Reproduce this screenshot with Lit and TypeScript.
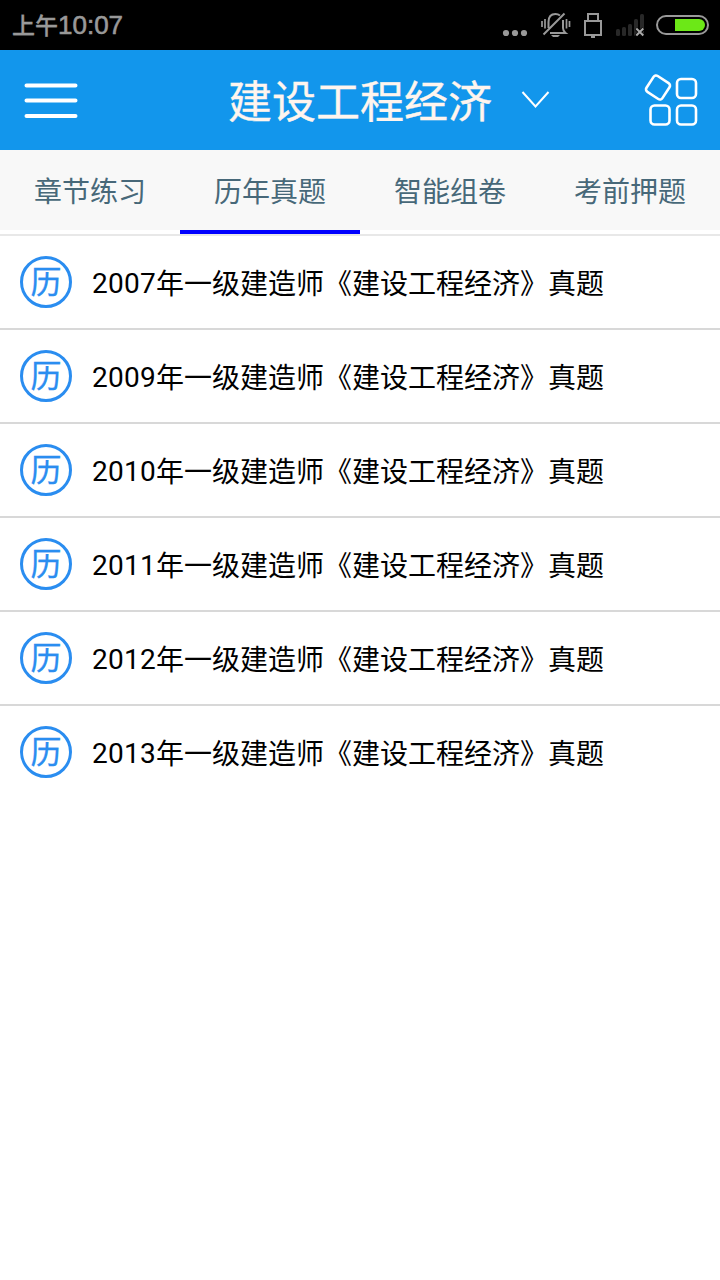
import { LitElement, html, css } from "lit";
import { customElement, property, state } from "lit/decorators.js";
import { classMap } from "lit/directives/class-map.js";

@customElement("status-bar")
class StatusBar extends LitElement {
  static styles = css`
    :host {
      display: flex;
      justify-content: space-between;
      height: 50px;
      background: #000;
      color: #999;
      overflow: hidden;
    }
    .time {
      display: flex;
      padding-left: 12px;
      font: 26px/50px "Liberation Sans", sans-serif;
      -webkit-text-stroke: 0.6px #999;
    }
    .cjk {
      font: 500 23px/48px "Noto Sans CJK SC", sans-serif;
      -webkit-text-stroke: 0.3px #999;
    }
    svg {
      display: block;
    }
  `;
  render() {
    return html`
      <div class="time"><span class="cjk">上午</span><span>10:07</span></div>
      <svg width="230" height="50" viewBox="490 0 230 50" fill="none" stroke="#999" stroke-width="2">
        <g fill="#999" stroke="none">
          <circle cx="506" cy="33" r="3.1" />
          <circle cx="515" cy="33" r="3.1" />
          <circle cx="524" cy="33" r="3.1" />
          <path d="M551 35h9l-2 2h-5z" />
        </g>
        <path d="M542 21v6M545 19v9.500M566.500 19v9.500M569.500 21v6" stroke-width="1.700" />
        <path d="M543.500 34.500L564.500 13.500M548.500 28v-6q0-8 7-8 2.500 0 4.500 1.500M563 20v8q0 3 2.500 5H550" stroke-width="2" />
        <path d="M588 21v-7h10v7M585 21h16v14h-16z" />
        <path d="M591 36.500h4" stroke-width="3" />
        <g fill="#282828" stroke="none">
          <rect x="616" y="29" width="4" height="7" rx="1.500" />
          <rect x="622" y="27" width="4" height="9" rx="1.500" />
          <rect x="628" y="24" width="4" height="12" rx="1.500" />
          <rect x="634" y="19" width="4" height="17" rx="1.500" />
          <rect x="640" y="14" width="4" height="22" rx="1.500" />
        </g>
        <path d="M636 28.500l7.500 7.500M643.500 28.500l-7.500 7.500" stroke="#000" stroke-width="3.500" />
        <path d="M636.300 28.500l7 7M643.300 28.500l-7 7" stroke="#aaa" />
        <rect x="657" y="16" width="51" height="18" rx="9" />
        <path d="M675 19h24a6 6 0 0 1 0 12h-24z" fill="#6ce817" stroke="none" />
      </svg>
    `;
  }
}

@customElement("title-bar")
class TitleBar extends LitElement {
  @property() heading = "";
  static styles = css`
    :host {
      display: grid;
      grid-template-columns: 228px 1fr 90px;
      height: 100px;
      background: #1296ec;
    }
    .title {
      display: flex;
      align-items: center;
      gap: 29px;
    }
    h1 {
      margin: 0;
      font: 400 44px/98px "Noto Sans CJK SC", sans-serif;
      height: 100px;
      color: #fff5ee;
      -webkit-text-stroke: 0.4px #fff5ee;
    }
    svg {
      display: block;
    }
  `;
  render() {
    return html`
      <svg width="100" height="100" stroke="#fff" stroke-width="4" stroke-linecap="round">
        <path d="M26.500 35.500h49M26.500 50.500h49M26.500 66h49" />
      </svg>
      <div class="title">
        <h1>${this.heading}</h1>
        <svg width="30" height="24" fill="none" stroke="#fff" stroke-width="2">
          <path d="M1.500 4L14.500 18.500L27.500 4" />
        </svg>
      </div>
      <svg width="90" height="100" fill="none" stroke="#fff" stroke-width="2.600">
        <rect x="18.500" y="28" width="19" height="19" rx="3" transform="rotate(33 28 37.500)" />
        <rect x="47" y="29" width="19" height="19" rx="4" />
        <rect x="20.500" y="55.500" width="19" height="19" rx="4" />
        <rect x="47" y="55.500" width="19" height="19" rx="4" />
      </svg>
    `;
  }
}

@customElement("tab-strip")
class TabStrip extends LitElement {
  @property({ attribute: false }) tabs: string[] = [];
  @state() private active = 1;
  static styles = css`
    :host {
      display: grid;
      grid-template-columns: repeat(4, 1fr);
      border-bottom: 2px solid #e8e8e8;
    }
    .tab {
      box-sizing: border-box;
      height: 84px;
      border: 0;
      border-bottom: 4px solid #fff;
      padding: 0;
      background: #f8f8f8;
      color: #476879;
      font: 28px/80px "Noto Sans CJK SC", sans-serif;
      text-align: center;
    }
    .active {
      border-bottom-color: #00f;
    }
  `;
  render() {
    return this.tabs.map(
      (tab, i) => html`<button
        class=${classMap({ tab: true, active: i === this.active })}
        @click=${() => (this.active = i)}
      >${tab}</button>`
    );
  }
}

@customElement("exam-row")
class ExamRow extends LitElement {
  @property() year = "";
  static styles = css`
    :host {
      display: flex;
      align-items: center;
      gap: 20px;
      height: 92px;
      padding-left: 20px;
      border-bottom: 2px solid #d8d8d8;
    }
    :host(:last-child) {
      border-bottom: 0;
    }
    .badge {
      box-sizing: border-box;
      width: 52px;
      height: 52px;
      border: 3px solid #2a8df0;
      border-radius: 50%;
      color: #2a8df0;
      font: 31px/42px "Noto Sans CJK SC", sans-serif;
      -webkit-text-stroke: 0.3px #2a8df0;
      text-align: center;
    }
    .label {
      height: 92px;
      color: #000;
      font: 28px/92px "Noto Sans CJK SC", sans-serif;
      white-space: nowrap;
    }
    .year {
      font-family: Roboto, sans-serif;
      letter-spacing: 0.27px;
      line-height: 1;
      vertical-align: 1px;
    }
  `;
  render() {
    return html`<div class="badge">历</div>
      <div class="label"><span class="year">${this.year}</span>年一级建造师《建设工程经济》真题</div>`;
  }
}

@customElement("app-root")
class AppRoot extends LitElement {
  private years = [2007, 2009, 2010, 2011, 2012, 2013];
  static styles = css`
    :host {
      display: flex;
      flex-direction: column;
      height: 1280px;
      background: #fff;
      overflow: hidden;
    }
  `;
  render() {
    return html`
      <status-bar></status-bar>
      <title-bar heading="建设工程经济"></title-bar>
      <tab-strip .tabs=${["章节练习", "历年真题", "智能组卷", "考前押题"]}></tab-strip>
      <main>
        ${this.years.map((y) => html`<exam-row year=${y}></exam-row>`)}
      </main>
    `;
  }
}
